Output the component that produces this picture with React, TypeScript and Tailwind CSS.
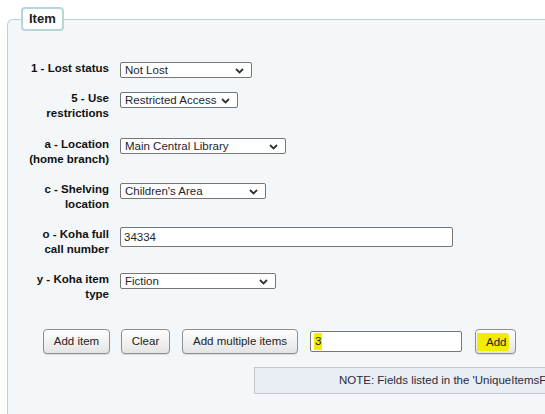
import { ReactNode } from "react";

const fields = [
  { label: ["1 - Lost status"], kind: "select", value: "Not Lost", width: "w-[132px]", mb: "mb-[13px]" },
  { label: ["5 - Use", "restrictions"], kind: "select", value: "Restricted Access", width: "w-[118px]", mb: "mb-[16px]" },
  { label: ["a - Location", "(home branch)"], kind: "select", value: "Main Central Library", width: "w-[166px]", mb: "mb-[15px]" },
  { label: ["c - Shelving", "location"], kind: "select", value: "Children's Area", width: "w-[146px]", mb: "mb-[15px]" },
  { label: ["o - Koha full", "call number"], kind: "input", value: "34334", width: "w-[333px]", mb: "mb-[15px]" },
  { label: ["y - Koha item", "type"], kind: "select", value: "Fiction", width: "w-[156px]", mb: "mb-[27px]" },
];

function Chevron() {
  return (
    <svg width="9" height="6" viewBox="0 0 9 6" className="absolute right-[7px] top-[5px]">
      <path d="M1 1 L4.5 4.5 L8 1" fill="none" stroke="#333" strokeWidth="1.8" />
    </svg>
  );
}

function FakeSelect({ value, width }: { value: string; width: string }) {
  return (
    <div className={`relative ${width} h-[16px] mt-[1px] border border-[#767676] rounded-[2px] bg-white text-[11.5px] leading-[14px] pl-[4px] text-[#1f2430] whitespace-nowrap overflow-hidden`}>
      {value}
      <Chevron />
    </div>
  );
}

function Button({ children, className = "" }: { children: ReactNode; className?: string }) {
  return (
    <button className={`h-[25px] flex items-center justify-center border border-[#8f8f8f] rounded-[4px] bg-gradient-to-b from-white to-[#e4e4e4] shadow-[0_1px_1px_rgba(0,0,0,0.12)] text-[11.5px] text-[#222] ${className}`}>
      {children}
    </button>
  );
}

export default function App() {
  return (
    <div className="w-[545px] h-[414px] overflow-hidden bg-white font-['Liberation_Sans',Arial,sans-serif] text-[#111]">
      <div className="pt-[19px] pl-[7px]">
        <div className="w-[700px] h-[420px] border-t border-l border-[#b6d3d6] rounded-tl-[6px] bg-[#f4f7f9]">
          {/* legend */}
          <div className="-mt-[13px] ml-[13px] flex w-fit h-[24px] items-center px-[6px] border-2 border-[#b7d6d8] rounded-[4px] bg-white text-[13px] font-bold text-[#222]">
            Item
          </div>

          <div className="mt-[30px]">
            {fields.map((f) => (
              <div key={f.label[0]} className={`flex items-start ${f.mb}`}>
                <div className="w-[101px] text-right font-bold text-[11.5px] leading-[15px] text-[#111]">
                  {f.label.map((l) => (
                    <div key={l}>{l}</div>
                  ))}
                </div>
                <div className="ml-[11px]">
                  {f.kind === "select" ? (
                    <FakeSelect value={f.value} width={f.width} />
                  ) : (
                    <div className={`${f.width} h-[20px] border border-[#767676] rounded-[2px] bg-white text-[11.5px] leading-[18px] pl-[3px] text-[#1f2430]`}>
                      {f.value}
                    </div>
                  )}
                </div>
              </div>
            ))}
          </div>

          <div className="flex items-center pl-[35px]">
            <Button className="w-[67px]">Add item</Button>
            <Button className="w-[49px] ml-[11px]">Clear</Button>
            <Button className="w-[116px] ml-[12px]">Add multiple items</Button>
            <div className="w-[152px] h-[21px] ml-[12px] border border-[#767676] rounded-[2px] bg-white pl-[3px] pt-[1px] text-[11.5px] leading-[17px] text-[#222]">
              <span className="inline-block bg-[#f2ec00] px-[1px] h-[17px]">3</span>
            </div>
            <Button className="w-[41px] ml-[13px] !justify-start pl-[1px]">
              <span className="bg-[#f2ec00] h-[18px] pl-[9px] pr-[3px] leading-[18px] rounded-r-[3px]">Add</span>
            </Button>
          </div>

          <div className="mt-[13px] ml-[246px] w-[420px] h-[27px] border border-[#c4c6ca] bg-[#e9eef5] pl-[84px] text-[11.5px] leading-[25px] text-[#2a2a3a] whitespace-nowrap overflow-hidden">
            NOTE: Fields listed in the 'UniqueItemsFields' system preference will not be copied.
          </div>
        </div>
      </div>
    </div>
  );
}
